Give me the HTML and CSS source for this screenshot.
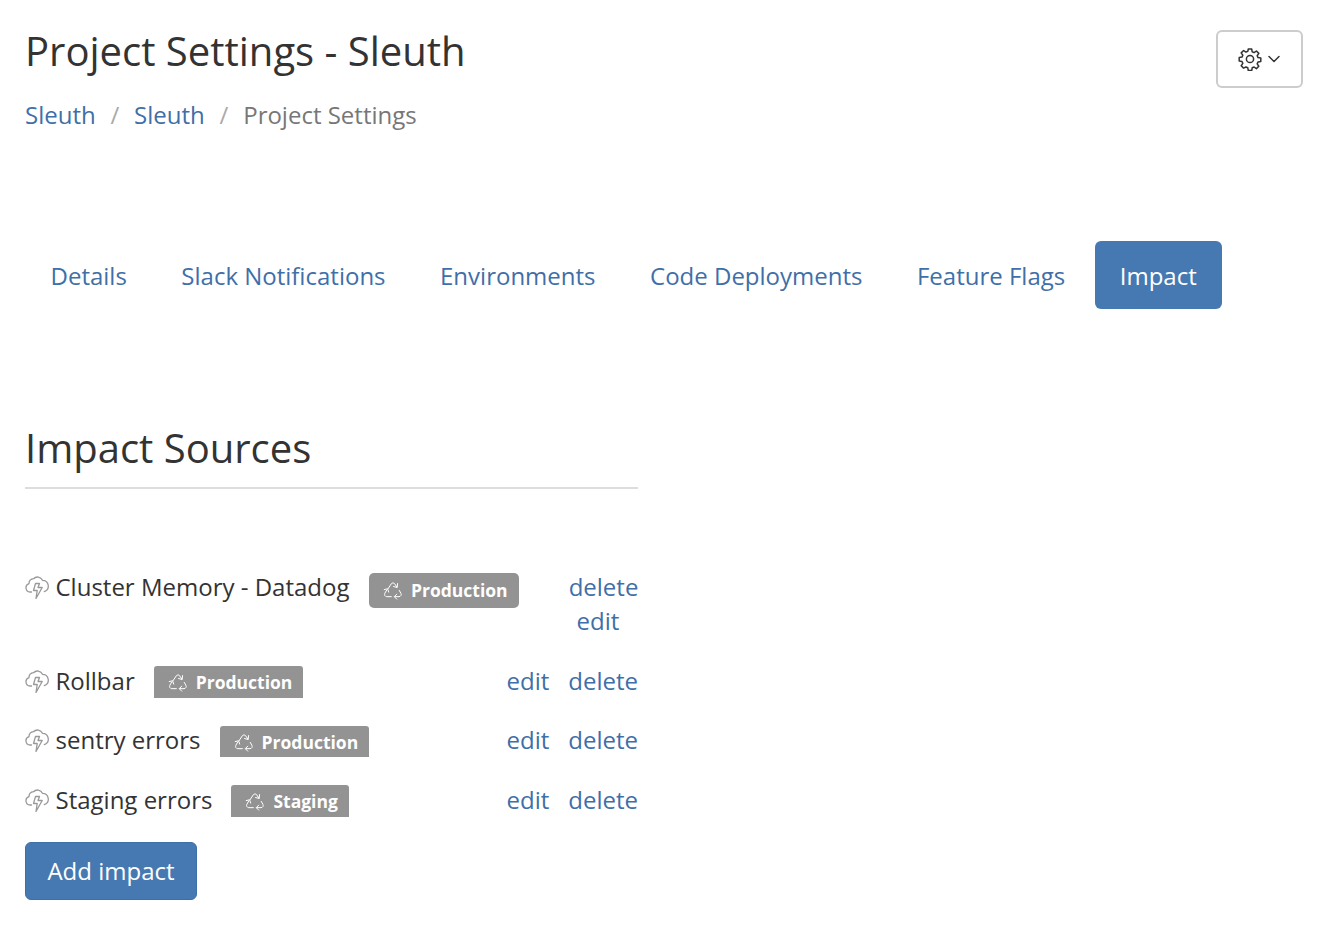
FILE: index.html
```html
<!DOCTYPE html>
<html lang="en">
<head>
    <meta charset="UTF-8">
    <title>Project Settings - Sleuth</title>
    <link rel="stylesheet" href="styles.css">
</head>
<body>
    <svg class="icon-defs" width="0" height="0">
        <symbol id="cloud-bolt" viewBox="0 0 24 24">
            <path d="M6.500 17H5a4.300 4.300 0 0 1-1-8.400A5 5 0 0 1 8.500 3.700a5.500 5.500 0 0 1 9 1.600 5.800 5.800 0 0 1 1.800 11.300" fill="none" stroke="currentColor" stroke-width="1.300" stroke-linecap="round" stroke-linejoin="round"/>
            <path d="M10.500 8.500 8.500 15.500h3.700L11 23.500l6.200-11h-4.200l1.500-4z" fill="none" stroke="currentColor" stroke-width="1.300" stroke-linejoin="round"/>
        </symbol>
        <symbol id="recycle" viewBox="0 0 24 24">
            <path d="M6 10.500 10 4.500c.8-1.300 3.200-1.300 4 0l2.700 4M17.500 4.300 17 9l-4.300-1.200M19.500 12.500l2 3.500c1 1.800-.3 4-2.300 4H14M16.500 17l-3 3 3 3M10 20H4.500c-2 0-3.200-2.200-2.300-4l2.300-4M1.500 11.500l4-1 1.300 4" fill="none" stroke="currentColor" stroke-width="1.200" stroke-linecap="round" stroke-linejoin="round"/>
        </symbol>
    </svg>

    <header class="page-header">
        <div>
            <h1>Project Settings - Sleuth</h1>
            <nav class="breadcrumb">
                <a href="#">Sleuth</a>
                <span class="sep">/</span>
                <a href="#">Sleuth</a>
                <span class="sep">/</span>
                <span class="current">Project Settings</span>
            </nav>
        </div>
        <button class="gear-btn" type="button" aria-label="Settings">
            <svg width="24" height="24" viewBox="0 0 24 24" fill="none" stroke="currentColor" stroke-width="1.500" stroke-linejoin="round">
                <path d="M10.300 2h3.400l.5 2.800 1.900.8 2.300-1.600 2.400 2.400-1.600 2.300.8 1.900 2.800.5v3.400l-2.800.5-.8 1.900 1.600 2.300-2.400 2.400-2.300-1.600-1.900.8-.5 2.800h-3.400l-.5-2.800-1.900-.8L5.600 21.100 3.200 18.700l1.600-2.300-.8-1.900-2.800-.5v-3.400L4 10.100l.8-1.900L3.200 5.900l2.400-2.400 2.300 1.600 1.900-.8z"/>
                <circle cx="12" cy="12" r="3.600"/>
            </svg>
            <svg width="14" height="14" viewBox="0 0 14 14" fill="none" stroke="currentColor" stroke-width="1.500" stroke-linecap="round" stroke-linejoin="round">
                <path d="M2 4.500 7 9.500 12 4.500"/>
            </svg>
        </button>
    </header>

    <ul class="tabs">
        <li><a href="#">Details</a></li>
        <li><a href="#">Slack Notifications</a></li>
        <li><a href="#">Environments</a></li>
        <li><a href="#">Code Deployments</a></li>
        <li><a href="#">Feature Flags</a></li>
        <li><a class="active" href="#">Impact</a></li>
    </ul>

    <section class="sources">
        <h2>Impact Sources</h2>

        <div class="source source-wrap">
            <svg class="source-icon"><use href="#cloud-bolt"/></svg>
            <span class="source-name">Cluster Memory - Datadog</span>
            <span class="badge badge-full"><svg class="badge-icon"><use href="#recycle"/></svg>Production</span>
            <span class="actions actions-stack">
                <a href="#">delete</a>
                <a class="stack-edit" href="#">edit</a>
            </span>
        </div>
        <div class="source">
            <svg class="source-icon"><use href="#cloud-bolt"/></svg>
            <span class="source-name">Rollbar</span>
            <span class="badge"><svg class="badge-icon"><use href="#recycle"/></svg>Production</span>
            <span class="actions"><a href="#">edit</a><a href="#">delete</a></span>
        </div>
        <div class="source">
            <svg class="source-icon"><use href="#cloud-bolt"/></svg>
            <span class="source-name">sentry errors</span>
            <span class="badge"><svg class="badge-icon"><use href="#recycle"/></svg>Production</span>
            <span class="actions"><a href="#">edit</a><a href="#">delete</a></span>
        </div>
        <div class="source">
            <svg class="source-icon"><use href="#cloud-bolt"/></svg>
            <span class="source-name">Staging errors</span>
            <span class="badge"><svg class="badge-icon"><use href="#recycle"/></svg>Staging</span>
            <span class="actions"><a href="#">edit</a><a href="#">delete</a></span>
        </div>

        <button class="add-btn" type="button">Add impact</button>
    </section>
</body>
</html>
```

FILE: styles.css
```css
/* General styles */
body {
    margin: 0;
    padding: 0 19px 0 25px;
    font-family: "Open Sans", sans-serif;
    font-size: 24px;
    line-height: 36px;
    color: #333;
    background: #fff;
}

a {
    color: #3f6fa8;
    text-decoration: none;
}

.icon-defs {
    position: absolute;
}

/* Header */
.page-header {
    display: flex;
    justify-content: space-between;
    align-items: flex-start;
    padding-top: 30px;
}

h1 {
    margin: -1px 0 0;
    font-size: 40px;
    font-weight: 400;
    line-height: 44px;
}

.breadcrumb {
    margin-top: 24px;
    display: flex;
    color: #777;
}

.sep {
    margin: 0 14.800px;
    color: #aaa;
}

.gear-btn {
    display: flex;
    align-items: center;
    justify-content: center;
    gap: 5px;
    width: 87px;
    height: 58px;
    padding: 0;
    background: #fff;
    color: #333;
    border: 2px solid #ccc;
    border-radius: 6px;
}

/* Tabs */
.tabs {
    display: flex;
    list-style: none;
    margin: 108px 0 0 .5px;
    padding: 0;
}

.tabs a {
    display: block;
    padding: 17px 25px 15px;
    margin-right: 4.500px;
    border-radius: 6px;
}

.tabs a.active {
    background: #4679b2;
    color: #fff;
}

/* Impact sources */
.sources {
    width: 613px;
    margin-top: 115px;
}

h2 {
    margin: 0 0 84px;
    padding: 1px 0 16px;
    font-size: 40px;
    font-weight: 400;
    line-height: 46px;
    border-bottom: 2px solid #ddd;
}

.source {
    display: flex;
    align-items: flex-start;
    height: 59.500px;
}

.source-wrap {
    height: 93.500px;
}

.source-icon {
    width: 24px;
    height: 24px;
    margin-top: 2px;
    margin-right: 6.500px;
    color: #999;
    flex: none;
}

.source-name {
    margin-top: -4px;
}

.badge {
    display: flex;
    align-items: center;
    height: 31.500px;
    margin: -.5px 0 0 19px;
    padding: 1px 11px 0 14px;
    box-sizing: border-box;
    background: #939393;
    color: #fff;
    font-size: 17.500px;
    line-height: 24px;
    font-weight: 700;
    border-radius: 3px 3px 0 0;
}

.badge-full {
    height: 35px;
    margin: 0 0 0 19.500px;
    border-radius: 5px;
    padding: 0 11px 2px 14px;
}

.badge-icon {
    width: 20px;
    height: 20px;
    margin-right: 8px;
}

.actions {
    margin-left: auto;
    margin-top: -4px;
    display: flex;
    gap: 19px;
}

.actions-stack {
    width: 69px;
    flex-direction: column;
    align-items: center;
    gap: 0;
    margin-top: -3px;
    line-height: 34px;
}

.stack-edit {
    margin-right: 11px;
}

.add-btn {
    display: block;
    width: 172px;
    height: 58px;
    margin-top: -3px;
    padding: 0;
    font: inherit;
    color: #fff;
    background: #4679b2;
    border: 1px solid #3f6fa8;
    border-radius: 6px;
}
```
